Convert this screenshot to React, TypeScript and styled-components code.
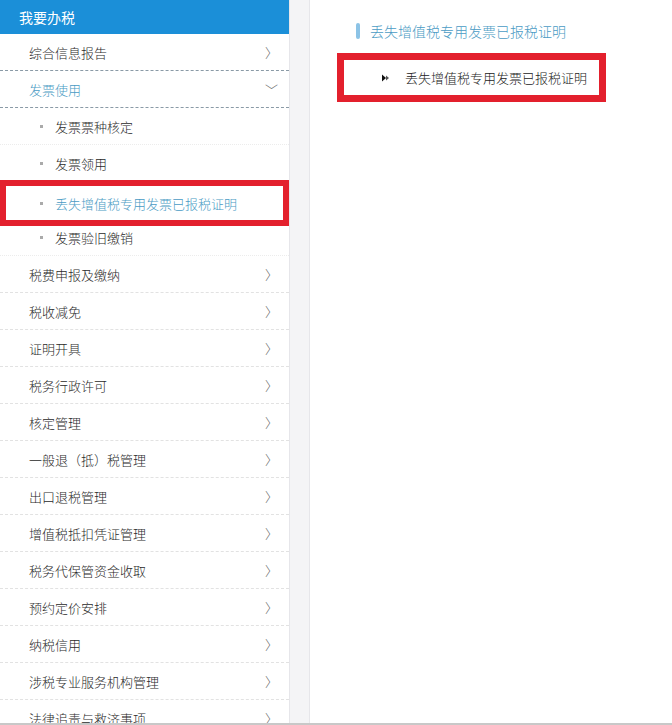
import React from "react";
import styled, { createGlobalStyle } from "styled-components";

const Global = createGlobalStyle`
  html, body { margin: 0; padding: 0; background: #fff; }
  body { font-family: "Microsoft YaHei", "Noto Sans CJK SC", "Noto Sans", sans-serif; }
`;

const Page = styled.div`
  display: flex;
  width: 672px;
  height: 725px;
  overflow: hidden;
  border-bottom: 2px solid #c8c8c8;
  box-sizing: border-box;
`;

const Sidebar = styled.div`
  width: 289px;
  flex: none;
  display: flex;
  flex-direction: column;
  background: #fff;
`;

const Gutter = styled.div`
  width: 19px;
  flex: none;
  background: #f4f4f6;
  border-left: 1px solid #e6e6ea;
  border-right: 1px solid #e6e6ea;
`;

const Header = styled.div`
  height: 34px;
  background: #1b8fd8;
  color: #fff;
  font-size: 14px;
  display: flex;
  align-items: center;
  padding-left: 19px;
  flex: none;
`;

const Row = styled.div<{ $strong?: boolean; $blue?: boolean }>`
  height: 37px;
  flex: none;
  display: flex;
  align-items: center;
  padding: 0 14px 0 29px;
  font-size: 13px;
  font-weight: 300;
  color: ${(p) => (p.$blue ? "#4a9bc4" : "#2a2a2a")};
  border-bottom: 1px dashed ${(p) => (p.$strong ? "#8a9aa6" : "#e2e2e2")};
  box-sizing: border-box;
`;

const Label = styled.span`
  flex: 1;
`;

const Chevron = styled.span`
  color: #666;
  font-size: 13px;
  width: 10px;
  text-align: center;
`;

const SubRow = styled.div<{ $active?: boolean }>`
  height: 37px;
  flex: none;
  display: flex;
  align-items: center;
  padding-left: 40px;
  font-size: 13px;
  font-weight: 300;
  color: ${(p) => (p.$active ? "#4a9bc4" : "#2a2a2a")};
  border-bottom: 1px dotted #ececec;
  box-sizing: border-box;
  ${(p) =>
    p.$active
      ? `border: 6px solid #e3202d; padding-left: 34px; height: 46px; margin: -2px 0 -7px 0; position: relative; z-index: 1; background: #fff;`
      : ""}
`;

const Bullet = styled.span`
  width: 3px;
  height: 3px;
  background: #aaa;
  margin-right: 12px;
  flex: none;
`;

const Content = styled.div`
  flex: 1;
  padding: 22px 0 0 46px;
`;

const Title = styled.div`
  display: flex;
  align-items: center;
  font-size: 14px;
  font-weight: 300;
  color: #4a9bc4;
  height: 17px;
`;

const TitleBar = styled.span`
  width: 4px;
  height: 16px;
  border-radius: 2px;
  background: #8cc3e6;
  margin-right: 10px;
`;

const Box = styled.div`
  margin: 14px 0 0 -19px;
  width: 269px;
  height: 49px;
  border: 7px solid #e3202d;
  box-sizing: border-box;
  display: flex;
  align-items: center;
  padding-left: 38px;
  font-size: 13px;
  font-weight: 300;
  color: #222;
`;

const Arrow = styled.svg`
  width: 8px;
  height: 8px;
  margin-right: 15px;
`;

const main = [
  "税费申报及缴纳",
  "税收减免",
  "证明开具",
  "税务行政许可",
  "核定管理",
  "一般退（抵）税管理",
  "出口退税管理",
  "增值税抵扣凭证管理",
  "税务代保管资金收取",
  "预约定价安排",
  "纳税信用",
  "涉税专业服务机构管理",
  "法律追责与救济事项",
];

const subs = ["发票票种核定", "发票领用", "丢失增值税专用发票已报税证明", "发票验旧缴销"];

export default function App() {
  return (
    <>
      <Global />
      <Page>
        <Sidebar>
          <Header>我要办税</Header>
          <Row $strong>
            <Label>综合信息报告</Label>
            <Chevron>〉</Chevron>
          </Row>
          <Row $strong $blue>
            <Label>发票使用</Label>
            <Chevron>﹀</Chevron>
          </Row>
          {subs.map((s, i) => (
            <SubRow key={s} $active={i === 2}>
              <Bullet />
              {s}
            </SubRow>
          ))}
          {main.map((m) => (
            <Row key={m}>
              <Label>{m}</Label>
              <Chevron>〉</Chevron>
            </Row>
          ))}
        </Sidebar>
        <Gutter />
        <Content>
          <Title>
            <TitleBar />
            丢失增值税专用发票已报税证明
          </Title>
          <Box>
            <Arrow viewBox="0 0 8 8">
              <path d="M0 0.5 L4 4 L0 7.5 Z" fill="#111" />
              <path d="M4 1.5 L7 4 L4 6.5 Z" fill="#555" />
            </Arrow>
            丢失增值税专用发票已报税证明
          </Box>
        </Content>
      </Page>
    </>
  );
}
